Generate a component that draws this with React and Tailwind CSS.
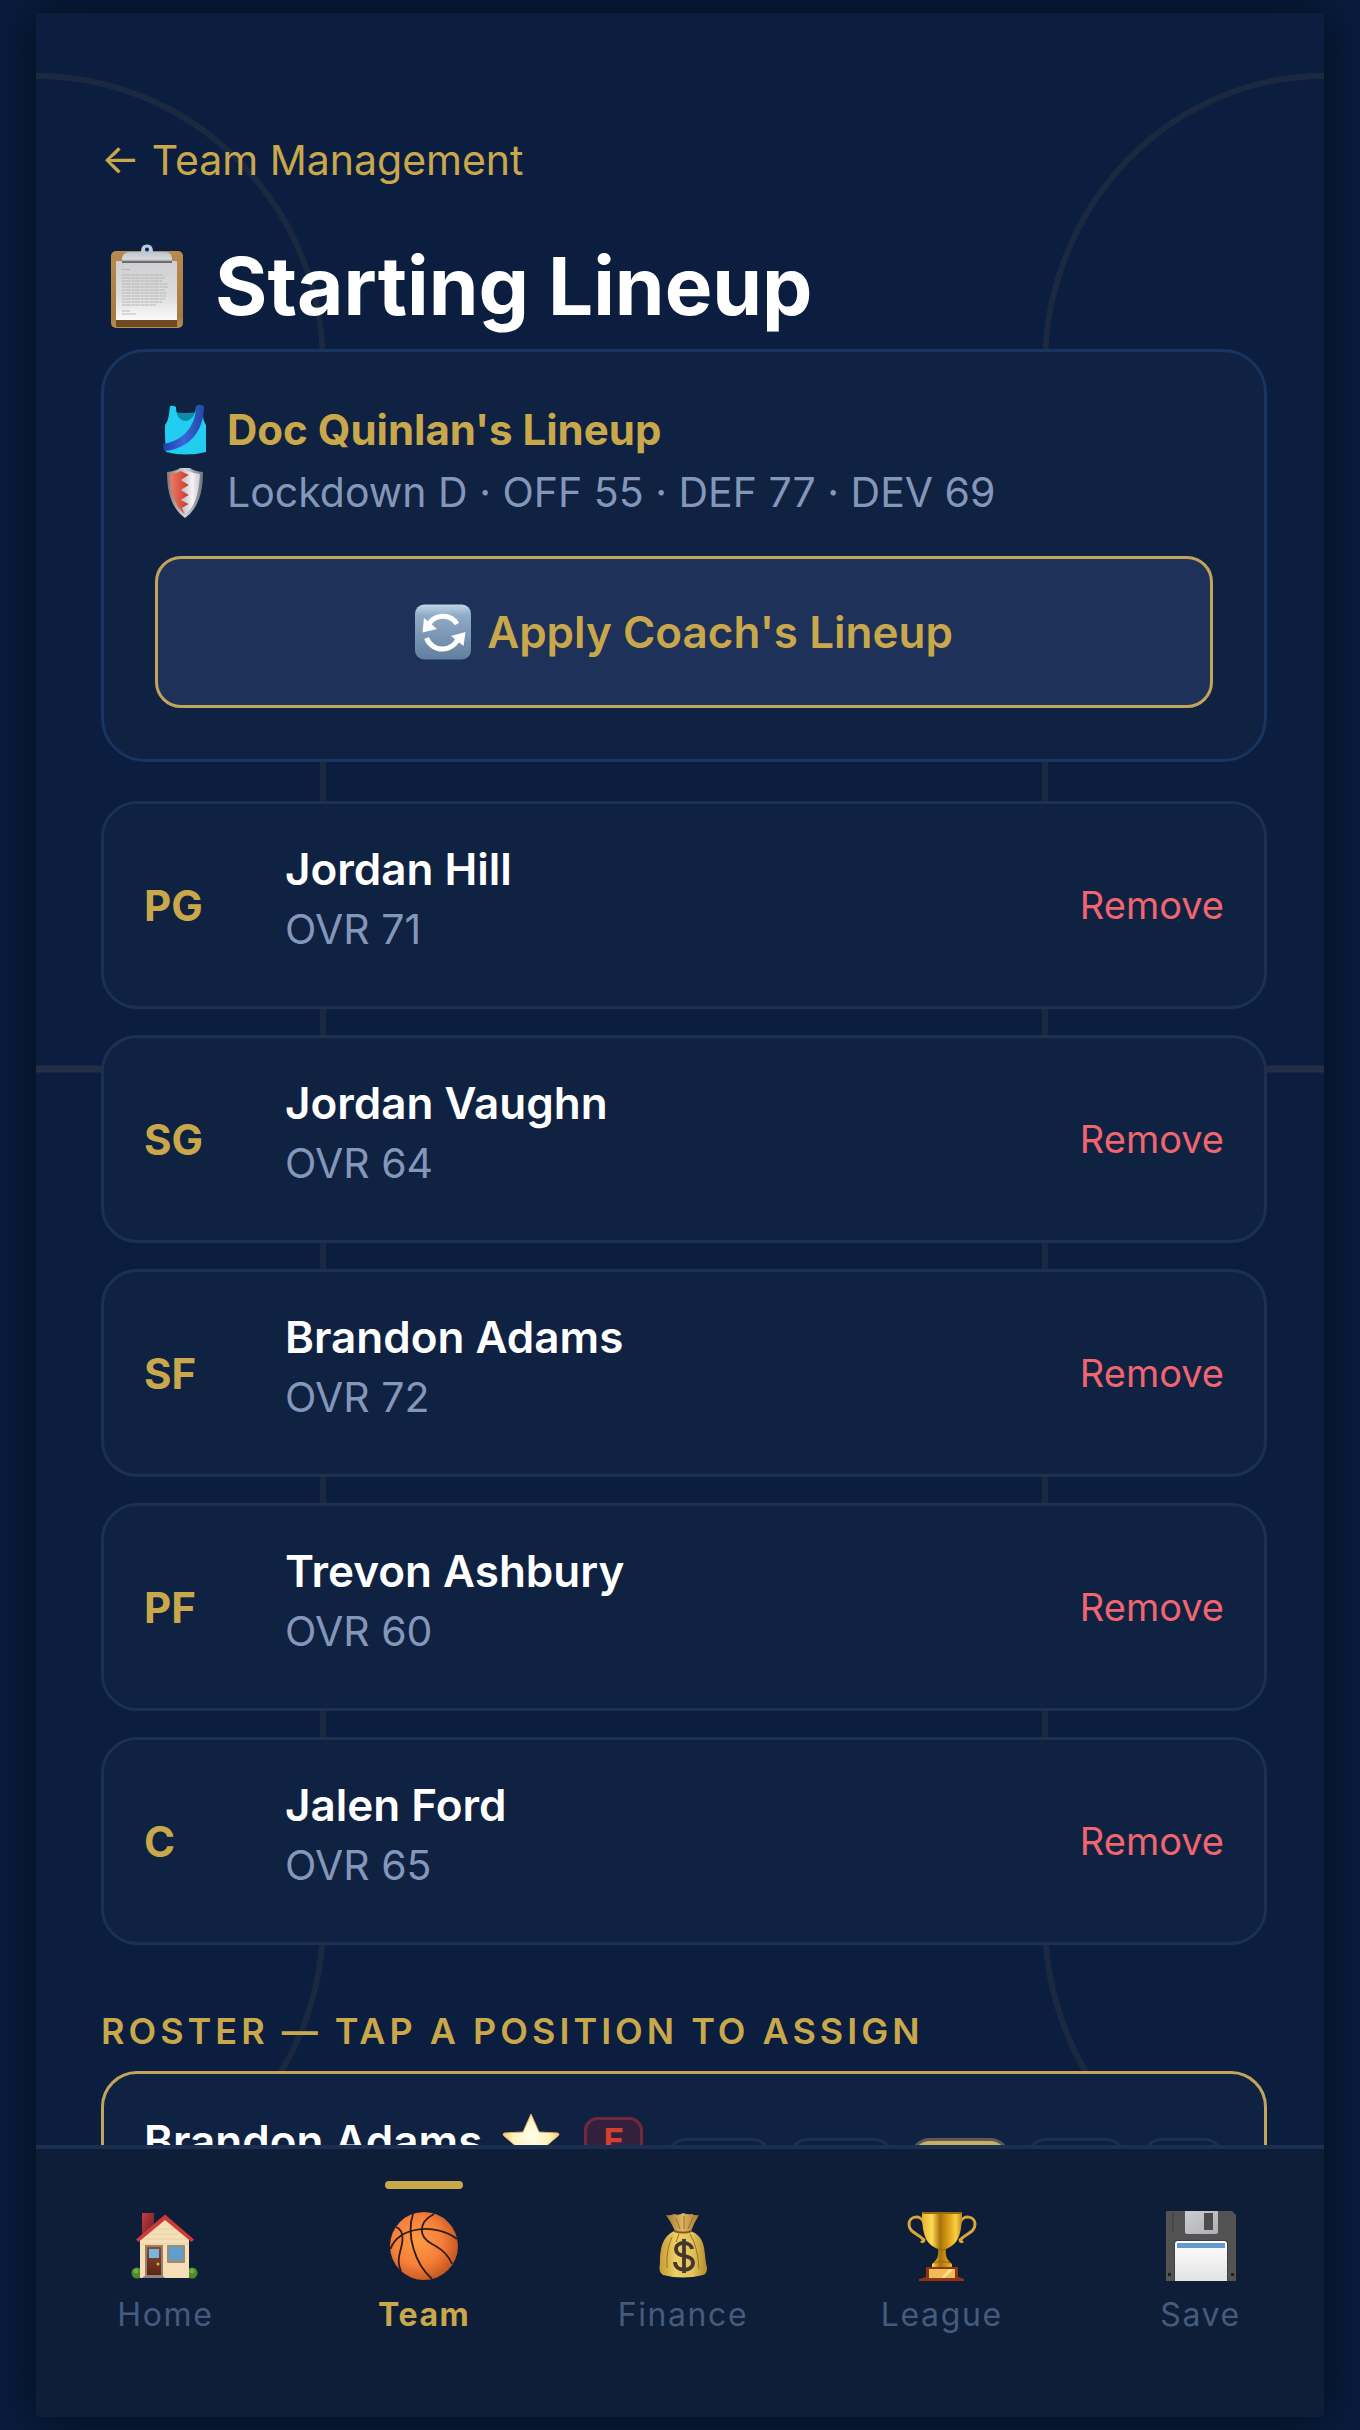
const lineup = [
  { pos: "PG", name: "Jordan Hill", ovr: 71 },
  { pos: "SG", name: "Jordan Vaughn", ovr: 64 },
  { pos: "SF", name: "Brandon Adams", ovr: 72 },
  { pos: "PF", name: "Trevon Ashbury", ovr: 60 },
  { pos: "C", name: "Jalen Ford", ovr: 65 },
];

function CourtLines() {
  return (
    <svg
      aria-hidden="true"
      className="absolute inset-0 h-full w-full"
      viewBox="0 0 1288 2404"
      preserveAspectRatio="none"
      fill="none"
      stroke="#c9a84c"
      strokeOpacity="0.08"
      strokeWidth="6"
    >
      <path d="M0 63A287 290 0 0 1 287 353V1908A287 290 0 0 1 0 2198" />
      <path d="M1288 63A279 290 0 0 0 1009 353V1908A279 290 0 0 0 1288 2198" />
      <path d="M0 1056H1288" stroke="#c9986c" strokeOpacity="0.13" strokeWidth="7" />
    </svg>
  );
}

function Clipboard({ className }) {
  return (
    <svg aria-hidden="true" className={className} viewBox="0 0 72 84">
      <defs>
        <linearGradient id="board" x1="0" y1="0" x2="0" y2="1">
          <stop offset="0" stopColor="#b98a4c" />
          <stop offset="0.85" stopColor="#a87b41" />
          <stop offset="1" stopColor="#b98c52" />
        </linearGradient>
        <linearGradient id="paper" x1="0" y1="0" x2="0" y2="1">
          <stop offset="0" stopColor="#cfcfd1" />
          <stop offset="0.6" stopColor="#dedede" />
          <stop offset="1" stopColor="#fafafa" />
        </linearGradient>
        <linearGradient id="clip" x1="0" y1="0" x2="0" y2="1">
          <stop offset="0" stopColor="#b9c4d2" />
          <stop offset="0.7" stopColor="#d9dadc" />
          <stop offset="1" stopColor="#8b8b8d" />
        </linearGradient>
      </defs>
      <rect x="0" y="7" width="72" height="77" rx="5" fill="url(#board)" />
      <path d="M5 76H66V83H5Z" fill="#6e4a22" />
      <path d="M5 17H66V76H5Z" fill="url(#paper)" />
      <path
        d="M11 25.500h8M11 31h41M11 34h43M11 37h41M11 40h45M11 43h46M11 46h43M11 49h44M11 52h44M11 55h43M11 58h41M11 61h34M11 67h8M11 70h14"
        stroke="#b4b4b6"
        strokeWidth="1.2"
        strokeDasharray="3 0.6 5 0.8"
      />
      <path d="M30 9C30 4 31 0.500 36 0.500S42 4 42 9Z" fill="#b8cbe4" />
      <path d="M11 18V14Q12 8 19 8H54Q60 8 61 14V18Z" fill="url(#clip)" />
      <path d="M11 17H61V19H11Z" fill="#6f6d6b" />
      <circle cx="36" cy="5.500" r="2" fill="#14233f" />
    </svg>
  );
}

function Jersey({ className }) {
  return (
    <svg aria-hidden="true" className={className} viewBox="0 0 44 50">
      <defs>
        <linearGradient id="sash" x1="0" y1="0" x2="1" y2="0">
          <stop offset="0" stopColor="#1c3fae" />
          <stop offset="0.5" stopColor="#3b66d8" />
          <stop offset="1" stopColor="#2347a5" />
        </linearGradient>
      </defs>
      <path d="M11 7Q22 9 35 7L34 17L22 22L10 16Z" fill="#0d8ba6" />
      <path
        d="M7 1Q10 0 13 2C13 10 16 15 22 16C29 16 33 9 33 1Q36 0 41 1C39 9 40 16 43 20L43 47Q23 52 3 47C2 38 2 29 2 20C6 15 6 8 7 1Z"
        fill="#22cdf2"
      />
      <path
        d="M33 1Q37 0 41 1C41 24 28 44 1 46L0 39C21 36 33 20 33 1Z"
        fill="url(#sash)"
      />
    </svg>
  );
}

function Shield({ className }) {
  return (
    <svg aria-hidden="true" className={className} viewBox="0 0 36 50">
      <defs>
        <linearGradient id="steel" x1="0" y1="0" x2="1" y2="0">
          <stop offset="0" stopColor="#85776f" />
          <stop offset="0.5" stopColor="#d4d4d6" />
          <stop offset="1" stopColor="#6d737b" />
        </linearGradient>
        <linearGradient id="red" x1="0" y1="0" x2="1" y2="0">
          <stop offset="0" stopColor="#ef7a67" />
          <stop offset="1" stopColor="#c73a26" />
        </linearGradient>
        <linearGradient id="silver" x1="0" y1="0" x2="1" y2="0">
          <stop offset="0" stopColor="#b9babf" />
          <stop offset="0.6" stopColor="#f4f4f6" />
          <stop offset="1" stopColor="#c9cacf" />
        </linearGradient>
      </defs>
      <path
        d="M0 4Q9 3 13 0H23Q27 3 36 4C36 25 31 41 18 50C5 41 0 25 0 4Z"
        fill="url(#steel)"
      />
      <path
        d="M3 6Q9 6 14 3L22 7L14 12L22 17L14 22L22 27L14 32L22 36L15 40L18 46C8 39 4 25 3 6Z"
        fill="url(#red)"
      />
      <path
        d="M14 3L22 7L14 12L22 17L14 22L22 27L14 32L22 36L15 40L18 46C29 39 32 23 33 6Q27 6 22 3Z"
        fill="url(#silver)"
      />
    </svg>
  );
}

function Refresh({ className }) {
  return (
    <svg aria-hidden="true" className={className} viewBox="0 0 56 55">
      <defs>
        <linearGradient id="key" x1="0" y1="0" x2="0" y2="1">
          <stop offset="0" stopColor="#c3d5e8" />
          <stop offset="0.2" stopColor="#8fabc8" />
          <stop offset="1" stopColor="#627f9d" />
        </linearGradient>
      </defs>
      <rect width="56" height="55" rx="9" fill="url(#key)" />
      <g fill="none" stroke="#fff" strokeWidth="5">
        <path d="M13 21.500A16.500 16.500 0 0 1 42 19.500" />
        <path d="M11.500 33.500A17 17 0 0 0 43.500 33" />
      </g>
      <path d="M9 13.500L7.500 28L22 24.500Z" fill="#fff" />
      <path d="M50.500 27.500L48.500 41.500L36 31.500Z" fill="#fff" />
    </svg>
  );
}

function Star({ className }) {
  return (
    <svg aria-hidden="true" className={className} viewBox="0 0 58 56">
      <defs>
        <radialGradient id="glow" cx="0.5" cy="0.4" r="0.55">
          <stop offset="0" stopColor="#fffef0" />
          <stop offset="0.6" stopColor="#fff3bd" />
          <stop offset="1" stopColor="#f3bd5b" />
        </radialGradient>
      </defs>
      <path
        d="M29 1L37 19L56 20Q58 21 56 23L42 35L46 53Q46 55 44 54L29 45L14 54Q12 55 12 53L16 35L2 23Q0 21 2 20L21 19Z"
        fill="url(#glow)"
        stroke="#e5a862"
        strokeWidth="1"
        strokeLinejoin="round"
      />
    </svg>
  );
}

function House({ className }) {
  return (
    <svg aria-hidden="true" className={className} viewBox="0 0 70 70">
      <defs>
        <linearGradient id="chimney" x1="0" y1="0" x2="1" y2="1">
          <stop offset="0" stopColor="#c53d3d" />
          <stop offset="1" stopColor="#5e1f26" />
        </linearGradient>
        <linearGradient id="door" x1="0" y1="0" x2="0" y2="1">
          <stop offset="0" stopColor="#8a4a30" />
          <stop offset="1" stopColor="#5a2415" />
        </linearGradient>
      </defs>
      <path d="M12 2H24V15L12 26Z" fill="url(#chimney)" />
      <circle cx="7" cy="62" r="5.500" fill="#4c8a2c" />
      <circle cx="62" cy="62" r="5.500" fill="#4c8a2c" />
      <circle cx="6" cy="60" r="2.500" fill="#70ab46" />
      <circle cx="62" cy="60" r="2.500" fill="#70ab46" />
      <path d="M35 8L59 28V67H10V28Z" fill="#f4dfb8" />
      <path
        d="M26 18H44M21 23H49M15 28H57M11 33H59"
        stroke="#e3cba0"
        strokeWidth="0.8"
      />
      <path
        d="M6 28.500L35 3.500L64 28.500L61.500 31L35 9L8.500 31Z"
        fill="#cf3a37"
      />
      <rect x="15" y="34" width="18" height="31" fill="#9a8066" />
      <rect x="17" y="36" width="14" height="29" fill="url(#door)" />
      <rect x="19" y="38" width="10" height="9" fill="#78b6e0" />
      <circle cx="28" cy="53" r="1.500" fill="#e2b04b" />
      <rect x="37" y="34" width="18" height="18" rx="1" fill="#a08a72" />
      <rect x="39" y="36" width="14" height="13" fill="#5e9fd2" />
      <path d="M12 67L16 64H32L35 67Z" fill="#8f8580" />
    </svg>
  );
}

function Basketball({ className }) {
  return (
    <svg aria-hidden="true" className={className} viewBox="0 0 70 70">
      <defs>
        <radialGradient id="ball" cx="0.4" cy="0.42" r="0.6">
          <stop offset="0" stopColor="#ff9a45" />
          <stop offset="0.6" stopColor="#f5803a" />
          <stop offset="1" stopColor="#c95a22" />
        </radialGradient>
      </defs>
      <circle cx="35" cy="35" r="34" fill="url(#ball)" />
      <g fill="none" stroke="#2e1c17" strokeWidth="1.8">
        <path d="M1.500 38C9 15 48 12 68 28" />
        <path d="M24 3C17 24 26 53 43 68" />
        <path d="M45 3C28 12 30 26 43 33S60 46 63 53" />
        <path d="M7 16C17 20 13 34 11 41S9 54 12 60" />
      </g>
    </svg>
  );
}

function MoneyBag({ className }) {
  return (
    <svg aria-hidden="true" className={className} viewBox="0 0 70 70">
      <defs>
        <linearGradient id="bag" x1="0" y1="0" x2="1" y2="0">
          <stop offset="0" stopColor="#c49a35" />
          <stop offset="0.35" stopColor="#ecd062" />
          <stop offset="0.7" stopColor="#e3c35a" />
          <stop offset="1" stopColor="#b58a2c" />
        </linearGradient>
        <linearGradient id="neck" x1="0" y1="0" x2="1" y2="0">
          <stop offset="0" stopColor="#a27631" />
          <stop offset="0.5" stopColor="#dcb766" />
          <stop offset="1" stopColor="#a8762f" />
        </linearGradient>
      </defs>
      <path
        d="M26 20H43C56 26 56 34 58 52Q61 62 55 64Q35 69 15 64Q10 61 12 52C12 38 14 26 26 20Z"
        fill="url(#bag)"
      />
      <path
        d="M18 4Q23 5 26 3Q31 5 35 2Q40 4 44 3Q47 5 51 4Q46 12 43 20H27Q23 11 18 4Z"
        fill="url(#neck)"
      />
      <path
        d="M28 7L32 18M36 5V18M45 6L40 18M24 26Q18 38 19 57M31 23L28 31M42 23Q50 36 51 58"
        fill="none"
        stroke="#9c7127"
        strokeWidth="1"
      />
      <path d="M26 19Q35 22 44 19V21Q35 24 26 21Z" fill="#8a4e2a" />
      <path
        d="M44 38C43 30 28 30 28 38C28 48 45 42 45 52C45 61 27 61 27 51M36 28V62"
        fill="none"
        stroke="#43372f"
        strokeWidth="3.800"
      />
    </svg>
  );
}

function Trophy({ className }) {
  return (
    <svg aria-hidden="true" className={className} viewBox="0 0 70 70">
      <defs>
        <linearGradient id="cup" x1="0" y1="0" x2="1" y2="0">
          <stop offset="0" stopColor="#e9b32a" />
          <stop offset="0.25" stopColor="#ffdc54" />
          <stop offset="0.45" stopColor="#a8720b" />
          <stop offset="0.65" stopColor="#d99c16" />
          <stop offset="0.85" stopColor="#f8d040" />
          <stop offset="1" stopColor="#c18714" />
        </linearGradient>
      </defs>
      <g fill="none" stroke="#d9a637" strokeWidth="3">
        <path d="M17 12C14 3 2 5 2 13C2 22 11 22 17 29C17 31 15 31 14 30" />
        <path d="M53 12C56 3 68 5 68 13C68 22 59 22 53 29C53 31 55 31 56 30" />
      </g>
      <path
        d="M15 1H55C55 22 52 33 39 38C38 45 40 49 45 53V57H25V53C30 49 32 45 31 38C18 33 15 22 15 1Z"
        fill="url(#cup)"
      />
      <path d="M15 1H55L54 3H16Z" fill="#9c6a0d" />
      <path d="M31 38Q35 40 39 38M27 52Q35 49 43 52" fill="none" stroke="#9a6508" strokeWidth="1.200" />
      <path d="M19 56H51V66L57 68V70H12V68L19 66Z" fill="#8f3411" />
      <rect x="22" y="58" width="26" height="9" fill="#f1bb55" />
      <path d="M34 67L42 58H47L38 67Z" fill="#ffdc8c" />
    </svg>
  );
}

function Floppy({ className }) {
  return (
    <svg aria-hidden="true" className={className} viewBox="0 0 70 70">
      <defs>
        <linearGradient id="label" x1="0" y1="0" x2="0" y2="1">
          <stop offset="0" stopColor="#ffffff" />
          <stop offset="1" stopColor="#e3e3e4" />
        </linearGradient>
        <linearGradient id="shutter" x1="0" y1="0" x2="1" y2="1">
          <stop offset="0" stopColor="#cccdd0" />
          <stop offset="1" stopColor="#aeb0b4" />
        </linearGradient>
      </defs>
      <path d="M1 0H66L70 4V70H0V1Q0 0 1 0Z" fill="#535353" />
      <path d="M7 1V22" stroke="#3f3f3f" strokeWidth="1" />
      <path d="M19 0H52V21Q52 23 50 23H21Q19 23 19 21Z" fill="url(#shutter)" />
      <rect x="38" y="2" width="9" height="17" fill="#4d4c4c" />
      <path d="M8 70V33Q8 29 12 29H58Q62 29 62 33V70Z" fill="#3f3f42" />
      <path d="M9 70V33Q9 30 12 30H58Q61 30 61 33V70Z" fill="url(#label)" />
      <rect x="11" y="32" width="48" height="5" fill="#6299cf" />
      <rect x="2" y="62" width="3" height="3" fill="#1f1f1f" />
      <rect x="65" y="62" width="3" height="3" fill="#1f1f1f" />
    </svg>
  );
}

const tabs = [
  { label: "Home", Icon: House },
  { label: "Team", Icon: Basketball, active: true },
  { label: "Finance", Icon: MoneyBag },
  { label: "League", Icon: Trophy },
  { label: "Save", Icon: Floppy },
];

const chips = [
  { pos: "PG", width: "w-[106px]" },
  { pos: "SG", width: "w-[106px]" },
  { pos: "SF", width: "w-[100px]", active: true },
  { pos: "PF", width: "w-[100px]" },
  { pos: "C", width: "w-[82px]" },
];

function SlotRow({ pos, name, ovr }) {
  return (
    <li className="flex h-52 items-center rounded-[36px] border-3 border-[#1b3052] bg-[#102242] px-10">
      <span className="w-[141px] shrink-0 text-[42px] font-bold text-[#c9a84c]">{pos}</span>
      <div className="min-w-0 flex-1 pb-3 leading-[60px]">
        <p className="text-[44px] font-semibold text-white">{name}</p>
        <p className="text-[41px] text-[#8497ba]">OVR {ovr}</p>
      </div>
      <button type="button" className="text-[38px] text-[#f0656f]">
        Remove
      </button>
    </li>
  );
}

export default function App() {
  return (
    <div className="h-screen bg-[#091d40] px-9 py-[13px] font-[Inter,sans-serif]">
      <div className="relative flex h-full flex-col overflow-hidden bg-[#0b1e3f] shadow-[0_0_48px_8px_rgba(4,14,26,0.85)]">
        <CourtLines />
        <main className="relative min-h-0 flex-1 overflow-hidden pt-[117px] pr-[57px] pl-[65px]">
          <a href="#team" className="block text-[41px] leading-[60px] text-[#c9a84c]">
            ← Team Management
          </a>
          <h1 className="mt-12 mb-[15px] flex items-center text-[80px] leading-24 font-bold text-white">
            <Clipboard className="mr-8 ml-[10px] h-21 w-18 shrink-0" />
            Starting Lineup
          </h1>

          <section className="rounded-[44px] border-3 border-[#18345f] bg-[#102242] px-[51px] pt-[46px] pb-[51px]">
            <h2 className="flex items-center text-[42px] leading-[63px] font-bold text-[#c9a84c]">
              <Jersey className="mr-5 ml-2 h-[50px] w-11 shrink-0" />
              Doc Quinlan's Lineup
            </h2>
            <p className="flex items-center text-[41px] leading-[63px] text-[#8497ba]">
              <Shield className="mr-6 ml-3 h-[50px] w-9 shrink-0" />
              Lockdown D · OFF 55 · DEF 77 · DEV 69
            </p>
            <button
              type="button"
              className="mt-8 flex h-[152px] w-full items-center justify-center rounded-[26px] border-3 border-[#c2a45c] bg-[#1e3158] text-[44px] font-semibold text-[#c9a84c]"
            >
              <Refresh className="mr-4 h-14 w-14 shrink-0" />
              Apply Coach's Lineup
            </button>
          </section>

          <ul className="mt-[39px] flex flex-col gap-[26px]">
            {lineup.map((slot) => (
              <SlotRow key={slot.pos} {...slot} />
            ))}
          </ul>

          <h2 className="mt-[62px] mb-4 text-[36px] leading-12 font-semibold tracking-[4px] text-[#c9a84c] uppercase">
            Roster — Tap a position to assign
          </h2>

          <article className="flex h-52 items-center rounded-[36px] border-3 border-[#c2a45c] bg-[#102242] px-10">
            <div className="flex-1 pb-2 leading-[60px]">
              <div className="flex items-center">
                <h3 className="text-[44px] font-semibold whitespace-nowrap text-white">Brandon Adams</h3>
                <Star className="ml-5 h-14 w-[58px] shrink-0" />
                <span className="ml-6 flex h-12 w-[59px] items-center justify-center rounded-[14px] border-3 border-[#73293a] bg-[#33203c] text-[34px] font-bold text-[#d3402f]">
                  E
                </span>
              </div>
              <p className="text-[41px] text-[#8497ba]">OVR 72</p>
            </div>
            <div className="flex gap-4">
              {chips.map(({ pos, width, active }) => (
                <button
                  key={pos}
                  type="button"
                  className={`${width} h-[74px] rounded-[20px] border-3 text-[36px] font-semibold ${
                    active
                      ? "border-[#5d5b55] bg-[#c9b067] text-[#0b1e3f]"
                      : "border-[#1b3052] bg-[#0e2044] text-[#8497ba]"
                  }`}
                >
                  {pos}
                </button>
              ))}
            </div>
          </article>
        </main>

        <nav
          aria-label="Main"
          className="relative -mr-[6px] grid h-[272px] shrink-0 grid-cols-5 border-t-4 border-[#1a2f52] bg-[#0e1e38]"
        >
          {tabs.map(({ label, Icon, active }) => (
            <a
              key={label}
              href={`#${label.toLowerCase()}`}
              aria-current={active ? "page" : undefined}
              className={`flex flex-col items-center pt-8 text-[32px] leading-10 tracking-wider ${
                active ? "font-bold text-[#c9a84c]" : "text-[#445b7e]"
              }`}
            >
              <span className={`h-2 w-[78px] rounded-full ${active ? "bg-[#c9a84c]" : ""}`} />
              <Icon className="mt-[22px] mb-[14px] h-[70px] w-[70px]" />
              {label}
            </a>
          ))}
        </nav>
      </div>
    </div>
  );
}
